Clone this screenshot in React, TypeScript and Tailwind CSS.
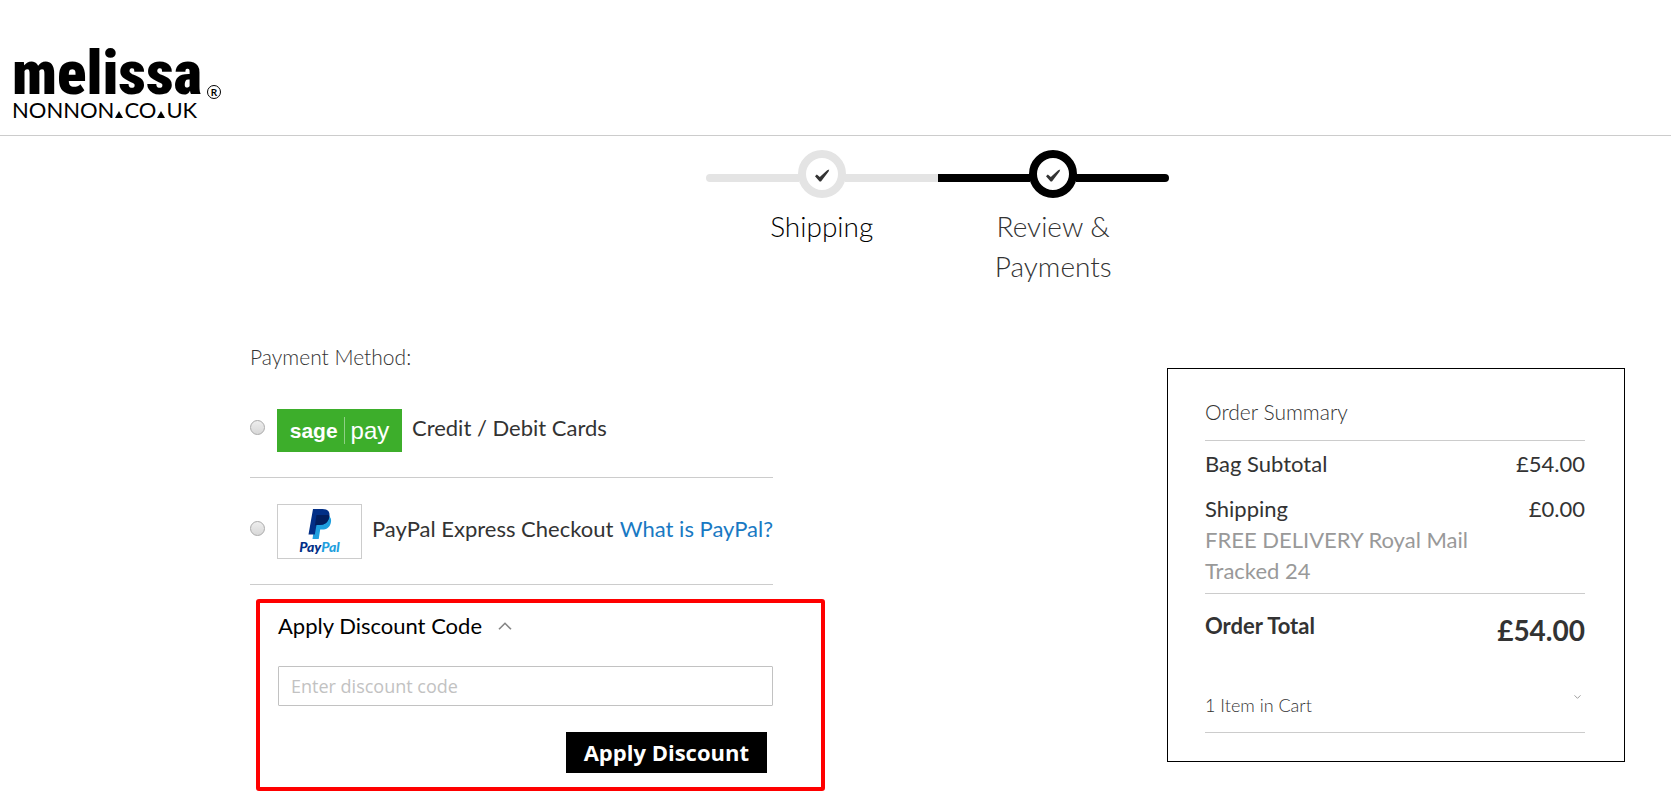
import { useState } from "react";

const SHIPPING_METHOD = "FREE DELIVERY Royal Mail Tracked 24";

export default function App() {
  const [code, setCode] = useState("");
  const [method, setMethod] = useState("");
  const [open, setOpen] = useState(true);

  return (
    <div className="bg-white font-['Lato',sans-serif] text-[22px] leading-[31px] text-[#333]">
      <header className="h-[136px] border-b border-[#ccc] pl-3 pt-6">
        <a href="#" aria-label="Melissa Nonnon" className="flex w-fit items-end gap-2 text-black">
          <Wordmark />
          <span className="mb-[21px] flex size-[14px] items-center justify-center rounded-full border border-black text-[10px] leading-[10px] font-bold">
            R
          </span>
        </a>
      </header>

      <main className="pl-[250px] pr-[46px]">
        <ol className="mx-auto flex w-[463px] pt-[14px]">
          <Step label="Shipping" />
          <Step label="Review & Payments" active />
        </ol>

        <div className="flex items-start justify-between pt-[55px]">
          <div className="w-[575px]">
            <h1 className="text-[21px] font-light">Payment Method:</h1>

            <div className="w-[523px] pt-[11px]">
              <PaymentOption id="sagepay" text="Credit / Debit Cards" value={method} onSelect={setMethod}>
                <SagePayLogo />
              </PaymentOption>
              <PaymentOption
                id="paypal"
                text="PayPal Express Checkout"
                value={method}
                onSelect={setMethod}
                link={
                  <a href="#" className="mb-[7px] text-[#1979c3]">
                    What is PayPal?
                  </a>
                }
              >
                <PayPalLogo />
              </PaymentOption>
            </div>

            <section className="ml-[6px] mt-[14px] rounded-[3px] border-4 border-[#f00] pb-[14px] pl-[18px] pr-[48px] pt-[7px]">
              <button
                type="button"
                onClick={() => setOpen(!open)}
                aria-expanded={open}
                className="flex items-center gap-4 text-black"
              >
                Apply Discount Code
                <Chevron className={open ? "h-2 w-[14px]" : "h-2 w-[14px] rotate-180"} />
              </button>
              {open && (
                <form onSubmit={(e) => e.preventDefault()} className="pt-[25px]">
                  <input
                    type="text"
                    aria-label="Enter discount code"
                    value={code}
                    onChange={(e) => setCode(e.target.value)}
                    placeholder="Enter discount code"
                    className="block h-10 w-full rounded-[1px] border border-[#c2c2c2] px-3 font-['Open_Sans',sans-serif] text-[18px] text-[#333] placeholder:text-[#c2c2c2]"
                  />
                  <button
                    type="submit"
                    className="ml-auto mr-[6px] mt-[26px] block h-[41px] bg-black px-[18px] font-['Open_Sans',sans-serif] text-[22px] font-bold text-white"
                  >
                    Apply Discount
                  </button>
                </form>
              )}
            </section>
          </div>

          <aside className="mt-[27px] w-[458px] border border-black pb-7 pl-[37px] pr-[39px] pt-[27px]">
            <h2 className="border-b border-[#ccc] pb-[13px] text-[21px] font-light">
              Order Summary
            </h2>
            <table className="w-full">
              <tbody>
                <tr className="align-top">
                  <th scope="row" className="py-[7px] text-left font-normal">
                    Bag Subtotal
                  </th>
                  <td className="py-[7px] text-right">£54.00</td>
                </tr>
                <tr className="border-b border-[#ccc] align-top">
                  <th scope="row" className="py-[7px] text-left font-normal">
                    <span className="block">Shipping</span>
                    <span className="block w-[280px] text-[#999]">{SHIPPING_METHOD}</span>
                  </th>
                  <td className="py-[7px] text-right">£0.00</td>
                </tr>
                <tr className="align-top">
                  <th scope="row" className="pt-4 text-left font-bold">
                    Order Total
                  </th>
                  <td className="pt-4 text-right text-[28px] leading-[41px] font-bold">£54.00</td>
                </tr>
              </tbody>
            </table>
            <button
              type="button"
              className="mt-[39px] flex w-full items-start justify-between border-b border-[#ccc] pb-[11px] text-[18px] font-light"
            >
              1 Item in Cart
              <Chevron className="mr-1 mt-[5px] h-1 w-[7px] rotate-180" />
            </button>
          </aside>
        </div>
      </main>
    </div>
  );
}

function Wordmark() {
  return (
    <span className="flex w-[187px] flex-col">
      <span className="h-[76px] font-['Roboto_Condensed','Liberation_Sans_Narrow',sans-serif] text-[61px] leading-[98px] font-black">
        melissa
      </span>
      <span className="flex items-baseline text-[22px] leading-5">
        NONNON
        <Triangle />
        CO
        <Triangle />
        UK
      </span>
    </span>
  );
}

function Triangle() {
  return (
    <svg viewBox="0 0 8 7" className="mx-px h-[7px] w-2" aria-hidden="true">
      <path d="M4 0 8 7H0z" fill="#000" />
    </svg>
  );
}

function Step({ label, active = false }: { label: string; active?: boolean }) {
  return (
    <li className="flex flex-1 flex-col items-center">
      <span className="flex w-full items-center">
        <span
          className={
            active ? "mt-2 h-2 flex-1 bg-black" : "mt-2 h-2 flex-1 rounded-l bg-[#e4e4e4]"
          }
        />
        <span
          className={
            active
              ? "-mx-px flex size-12 items-center justify-center rounded-full border-8 border-black"
              : "-mx-px flex size-12 items-center justify-center rounded-full border-8 border-[#e4e4e4]"
          }
        >
          <svg viewBox="0 0 16 14" className="mt-1 h-[14px] w-4" aria-hidden="true">
            <path d="M1 7.2 2.8 5.4 5.8 8 13.2 1.2 15.2.6 14.6 2.4 7 12.6H5.6z" fill="#333" />
          </svg>
        </span>
        <span
          className={
            active ? "mt-2 h-2 flex-1 rounded-r bg-black" : "mt-2 h-2 flex-1 bg-[#e4e4e4]"
          }
        />
      </span>
      <span
        className={
          active
            ? "w-[160px] pt-2 text-center text-[28px] leading-10 font-light"
            : "w-[160px] pt-2 text-center text-[28px] leading-10 font-light text-black"
        }
      >
        {label}
      </span>
    </li>
  );
}

function PaymentOption({
  id,
  text,
  value,
  onSelect,
  link,
  children,
}: {
  id: string;
  text: string;
  value: string;
  onSelect: (id: string) => void;
  link?: React.ReactNode;
  children: React.ReactNode;
}) {
  return (
    <div className="flex items-center justify-between border-b border-[#ccc] pb-[25px] pt-[26px]">
      <div className="flex items-center gap-3">
        <input
          id={id}
          type="radio"
          name="payment"
          checked={value === id}
          onChange={() => onSelect(id)}
          className="mb-[7px] size-[15px] appearance-none rounded-full border border-[#aaa] bg-linear-to-b from-[#eee] to-[#d8d8d8] checked:border-4 checked:border-[#555]"
        />
        <label htmlFor={id} className="flex items-center gap-[10px]">
          {children}
          <span className="mb-[7px]">{text}</span>
        </label>
      </div>
      {link}
    </div>
  );
}

function SagePayLogo() {
  return (
    <span className="flex h-[43px] w-[125px] items-center justify-center gap-[6px] bg-[#3dae2b] font-['Liberation_Sans',sans-serif] text-white">
      <span className="text-[21px] font-bold">sage</span>
      <span className="h-[27px] w-px bg-[#8fd085]" />
      <span className="text-[24px]">pay</span>
    </span>
  );
}

function PayPalLogo() {
  return (
    <span className="flex h-[55px] w-[85px] flex-col items-center border border-[#ccc] pt-1">
      <svg viewBox="0 0 24 30" className="h-[30px] w-6" aria-hidden="true">
        <path
          d="M8 6h11c3.500 1.500 4.800 4 3.800 8-1.100 4.600-4.300 6.500-8.800 6.500h-1.800L10.700 30H4.500z"
          fill="#1f9fde"
        />
        <path
          d="M5 0h9.500c5.500 0 7.800 3 6.800 7.800C20.300 13.200 17 16 11.300 16H8.500L6.800 25.500H.5z"
          fill="#022f87"
        />
        <path
          d="M8.500 6H20c1.200 0 1.500.8 1.300 1.800C20.300 13.200 17 16 11.300 16H8.500L6.900 16.800z"
          fill="#021e5e"
        />
      </svg>
      <span className="text-[14px] leading-4 font-black text-[#022f87] italic">
        Pay<span className="text-[#1f9fde]">Pal</span>
      </span>
    </span>
  );
}

function Chevron({ className }: { className: string }) {
  return (
    <svg viewBox="0 0 14 8" className={className} fill="none" aria-hidden="true">
      <path d="M1 7.300 7 1.300 13 7.300" stroke="#858585" strokeWidth="1.600" />
    </svg>
  );
}
